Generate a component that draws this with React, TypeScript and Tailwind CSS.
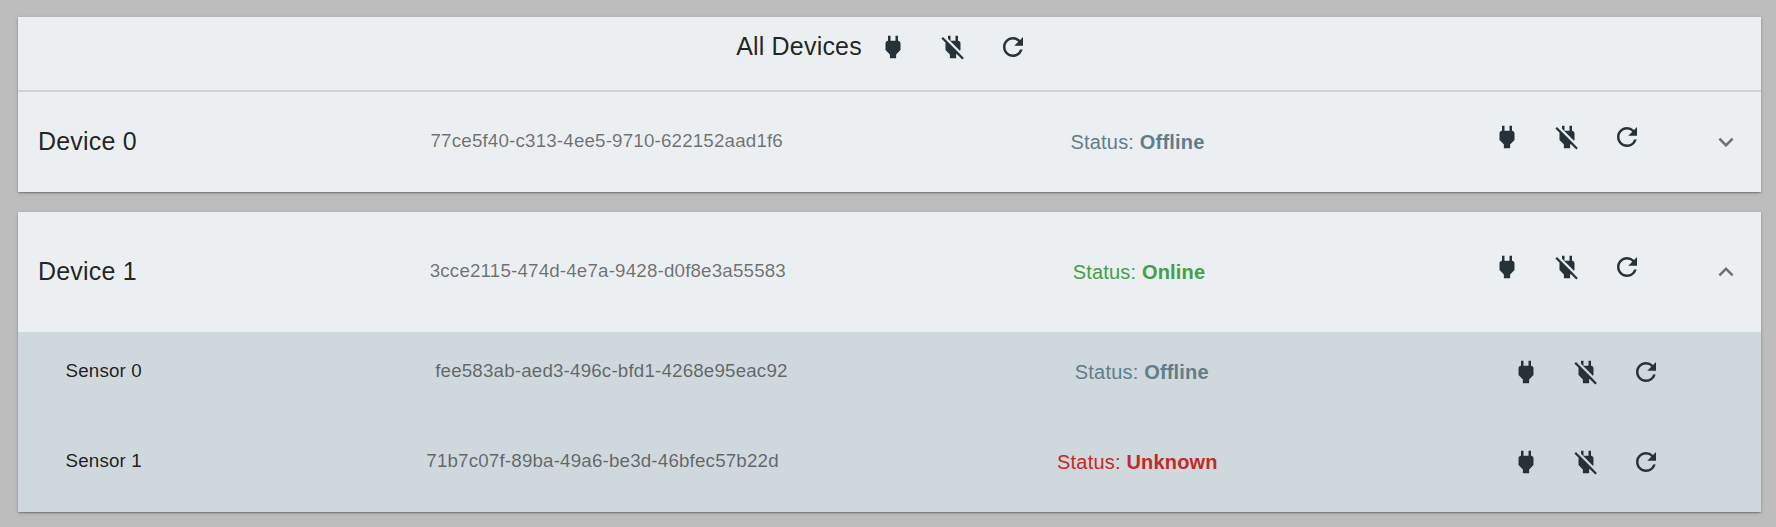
import type { ReactNode } from "react";
import { MdPower, MdPowerOff, MdRefresh, MdExpandMore, MdExpandLess } from "react-icons/md";

type StatusValue = "Offline" | "Online" | "Unknown";

const statusColor: Record<StatusValue, string> = {
  Offline: "text-[#607d8b]",
  Online: "text-[#43a047]",
  Unknown: "text-[#c62828]",
};

function IconButton({ label, children }: { label: string; children: ReactNode }) {
  return (
    <button aria-label={label} className="flex size-[60px] items-center justify-center">
      {children}
    </button>
  );
}

function Actions() {
  return (
    <div className="flex text-[#263238]">
      <IconButton label="Connect"><MdPower size={30} /></IconButton>
      <IconButton label="Disconnect"><MdPowerOff size={30} /></IconButton>
      <IconButton label="Refresh"><MdRefresh size={30} /></IconButton>
    </div>
  );
}

function Identifier({ children }: { children: string }) {
  return <div className="pb-px text-[18.75px] tracking-[0.00938em] text-black/54">{children}</div>;
}

function Status({ value }: { value: StatusValue }) {
  return (
    <div className={`text-[20px] tracking-[0.00938em] ${statusColor[value]}`}>
      Status: <b>{value}</b>
    </div>
  );
}

interface ItemProps {
  name: string;
  id: string;
  status: StatusValue;
}

function Device({ name, id, status, open }: ItemProps & { open?: boolean }) {
  return (
    <div className={`flex items-center pr-5 pl-5 ${open ? "h-[120px]" : "h-[100px]"}`}>
      <div className="flex w-[1634px] items-center justify-between">
        <div className="w-[105px] text-[25px] tracking-[0.0075em] whitespace-nowrap">{name}</div>
        <Identifier>{id}</Identifier>
        <Status value={status} />
        <div className="mr-[15px] -ml-[15px] pb-[10px]"><Actions /></div>
      </div>
      <div className="ml-auto text-black/54">
        {open ? <MdExpandLess size={30} /> : <MdExpandMore size={30} />}
      </div>
    </div>
  );
}

function Sensor({ name, id, status }: ItemProps) {
  return (
    <div className="mb-[10px] flex h-20 items-center justify-between pr-[85px] pl-[47.5px]">
      <div className="w-[82.5px] pb-px text-[18.75px] tracking-[0.00938em] whitespace-nowrap">{name}</div>
      <Identifier>{id}</Identifier>
      <Status value={status} />
      <Actions />
    </div>
  );
}

function Card({ children }: { children: ReactNode }) {
  return (
    <section className="bg-[#eceff1] shadow-[0_1.25px_3.75px_0_rgba(0,0,0,0.2),0_1.25px_1.25px_0_rgba(0,0,0,0.14),0_2.5px_1.25px_-1.25px_rgba(0,0,0,0.12)]">
      {children}
    </section>
  );
}

export default function App() {
  return (
    <main className="flex h-[527px] flex-col gap-5 bg-[#bdbdbd] pt-[17px] pr-[15px] pl-[18px] font-['Liberation_Sans',Arial,sans-serif] text-black/87">
      <Card>
        <header className="flex h-[75px] items-start justify-center border-b-2 border-black/12">
          <h1 className="flex h-[60px] items-center pr-px text-[25px] tracking-[0.0075em]">All Devices</h1>
          <Actions />
        </header>
        <Device name="Device 0" id="77ce5f40-c313-4ee5-9710-622152aad1f6" status="Offline" />
      </Card>
      <Card>
        <Device name="Device 1" id="3cce2115-474d-4e7a-9428-d0f8e3a55583" status="Online" open />
        <div className="flow-root h-[180px] bg-[#cfd8dc]">
          <Sensor name="Sensor 0" id="fee583ab-aed3-496c-bfd1-4268e95eac92" status="Offline" />
          <Sensor name="Sensor 1" id="71b7c07f-89ba-49a6-be3d-46bfec57b22d" status="Unknown" />
        </div>
      </Card>
    </main>
  );
}
